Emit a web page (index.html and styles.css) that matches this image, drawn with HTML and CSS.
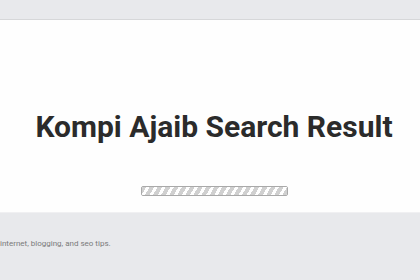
FILE: index.html
```html
<!DOCTYPE html>
<html>
<head>
<meta charset="utf-8">
<link rel="stylesheet" href="styles.css">
</head>
<body>
<div class="page">
  <header class="topbar"></header>
  <main class="hero">
    <h1 class="title">Kompi Ajaib Search Result</h1>
    <div class="loader"><div class="stripes"></div></div>
  </main>
  <footer class="footer">
    <p class="footer-text">internet, blogging, and seo tips.</p>
  </footer>
</div>
</body>
</html>
```

FILE: styles.css
```css
html, body {
  margin: 0;
  padding: 0;
  width: 420px;
  height: 280px;
  overflow: hidden;
  background: #e8e9ec;
  font-family: Roboto, "Liberation Sans", sans-serif;
}
.page {
  display: flex;
  flex-direction: column;
  height: 280px;
}
.topbar {
  height: 19px;
  background: #e8e9ec;
  border-bottom: 1px solid #d6d7d9;
}
.hero {
  height: 192px;
  background: #fefefe;
  display: flex;
  flex-direction: column;
  align-items: center;
  box-sizing: border-box;
  padding-top: 91px;
}
.title {
  margin: 0 0 0 8px;
  font-size: 30px;
  font-weight: 700;
  line-height: 32px;
  color: #2b2b2b;
  letter-spacing: 0;
}
.loader {
  margin: 43px 0 0 8px;
  width: 147px;
  height: 10px;
  box-sizing: border-box;
  border: 1px solid #a9a9a9;
  border-radius: 2px;
  background: #fff;
  overflow: hidden;
}
.stripes {
  height: 100%;
  background: repeating-linear-gradient(-60deg, #d0d0d0 0 4px, #fff 4px 7px);
}
.footer {
  flex: 1;
  background: #e8e9ec;
  border-top: 1px solid #f0f0f2;
}
.footer-text {
  margin: 26px 0 0 0;
  font-size: 8px;
  line-height: 10px;
  color: #7a7a7a;
}
```
